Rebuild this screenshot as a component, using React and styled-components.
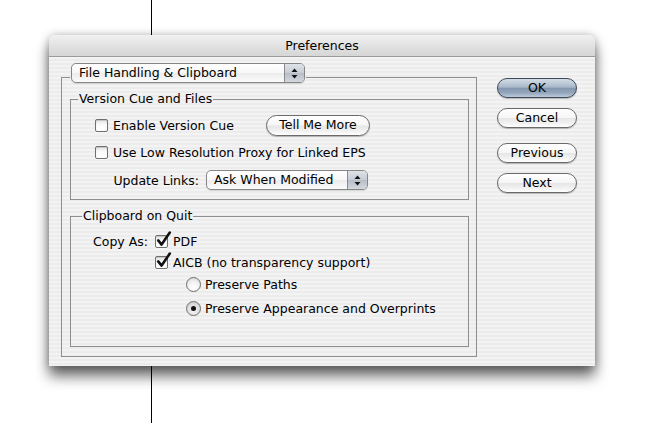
import React from "react";
import styled, { createGlobalStyle, css } from "styled-components";

const Global = createGlobalStyle`
  html, body { margin: 0; padding: 0; background: #fff; }
  * { box-sizing: border-box; }
`;

const FONT = `"DejaVu Sans", "Lucida Grande", "Noto Sans", sans-serif`;

const Stage = styled.div`
  position: relative;
  width: 645px;
  height: 423px;
  overflow: hidden;
  background: #fff;
  padding: 35px 0 0 49px;
  font-family: ${FONT};
  font-size: 12.5px;
  color: #000;
`;

const Guide = styled.div`
  position: absolute;
  left: 151px;
  top: 0;
  bottom: 0;
  width: 1px;
  background: #000;
  z-index: 0;
`;

const Dialog = styled.div`
  position: relative;
  z-index: 1;
  width: 546px;
  height: 331px;
  display: flex;
  flex-direction: column;
  border-radius: 6px 6px 0 0;
  background: repeating-linear-gradient(
    to bottom,
    #ececec 0px,
    #ececec 2px,
    #f3f3f3 2px,
    #f3f3f3 4px
  );
  box-shadow: 0 10px 14px rgba(0, 0, 0, 0.6), 0 0 8px rgba(0, 0, 0, 0.25);
`;

const TitleBar = styled.div`
  height: 22px;
  line-height: 21px;
  text-align: center;
  font-size: 12.5px;
  border-radius: 6px 6px 0 0;
  border-bottom: 1px solid #9b9b9b;
  background: linear-gradient(to bottom, #f1f1f1 0%, #e2e2e2 50%, #d6d6d6 100%);
`;

const Body = styled.div`
  flex: 1;
  display: flex;
  gap: 20px;
  padding: 6px 18px 9px 12px;
`;

const Group = styled.fieldset`
  margin: ${(p) => p.$mt || 0}px 0 0 0;
  min-inline-size: 0;
  border: 1px solid #8e8e8e;
  padding: ${(p) => p.$pad || "0"};
  width: ${(p) => p.$w}px;
  display: flex;
  flex-direction: column;
`;

const Legend = styled.legend`
  padding: 0 ${(p) => p.$px ?? 1}px ${(p) => p.$pb || 0}px ${(p) => p.$px ?? 1}px;
  margin-left: ${(p) => p.$ml || 0}px;
  line-height: 16px;
  height: ${(p) => p.$h || 16}px;
`;

const Row = styled.div`
  display: flex;
  align-items: center;
  height: ${(p) => p.$h}px;
  margin-top: ${(p) => p.$mt}px;
  padding-left: ${(p) => p.$indent}px;
  white-space: nowrap;
`;

const CheckWrap = styled.label`
  display: flex;
  align-items: center;
  gap: ${(p) => p.$gap ?? 5}px;
  width: ${(p) => (p.$w ? `${p.$w}px` : "auto")};
`;

const Box = styled.span`
  position: relative;
  display: inline-block;
  flex: none;
  width: 13px;
  height: 13px;
  border: 1px solid #6f6f6f;
  border-radius: 2px;
  background: linear-gradient(to bottom, #e4e4e4 0%, #fbfbfb 45%, #ffffff 100%);
  box-shadow: inset 0 1px 1px rgba(0, 0, 0, 0.15), 0 1px 0 rgba(255, 255, 255, 0.6);
`;

const CheckMark = styled.svg`
  position: absolute;
  left: 0px;
  top: -4px;
  width: 15px;
  height: 15px;
  overflow: visible;
`;

const Radio = styled.span`
  position: relative;
  display: inline-block;
  flex: none;
  width: 15px;
  height: 15px;
  border-radius: 50%;
  border: 1px solid #6f6f6f;
  background: radial-gradient(circle at 50% 75%, #ffffff 0%, #f4f4f4 45%, #d2d2d2 100%);
  ${(p) =>
    p.$on &&
    css`
      background: radial-gradient(circle at 50% 70%, #f4f4f4 0%, #dcdcdc 60%, #bdbdbd 100%);
      &::after {
        content: "";
        position: absolute;
        left: 4px;
        top: 4px;
        width: 5px;
        height: 5px;
        border-radius: 50%;
        background: #111;
      }
    `}
`;

const Popup = styled.div`
  display: flex;
  align-items: stretch;
  width: ${(p) => p.$w}px;
  height: 20px;
  border: 1px solid #868686;
  border-radius: 5px;
  overflow: hidden;
  background: linear-gradient(to bottom, #ffffff 0%, #f7f7f7 50%, #ececec 51%, #fbfbfb 100%);
  box-shadow: 0 1px 1px rgba(0, 0, 0, 0.12);
`;

const PopupText = styled.span`
  flex: 1;
  padding-left: 7px;
  line-height: 18px;
  white-space: nowrap;
`;

const PopupArrows = styled.span`
  width: 20px;
  display: flex;
  align-items: center;
  justify-content: center;
  border-left: 1px solid #8a8a8a;
  background: linear-gradient(to bottom, #dfe3e8 0%, #c6ccd4 50%, #b6bdc7 51%, #d3d8de 100%);
`;

const Side = styled.div`
  display: flex;
  flex-direction: column;
  padding-top: 15px;
`;

const PillButton = styled.button`
  font-family: ${FONT};
  font-size: 12.5px;
  color: #000;
  width: ${(p) => p.$w || 80}px;
  height: ${(p) => p.$h || 20}px;
  margin-top: ${(p) => p.$mt || 0}px;
  padding: 0;
  line-height: 1;
  border: 1px solid #6a6a6a;
  border-radius: 11px;
  background: linear-gradient(to bottom, #ffffff 0%, #f6f6f6 48%, #e6e6e6 52%, #f2f2f2 80%, #ffffff 100%);
  box-shadow: 0 1px 1px rgba(0, 0, 0, 0.25);
  ${(p) =>
    p.$default &&
    css`
      border-color: #3d4858;
      background: linear-gradient(
        to bottom,
        #d4dde7 0%,
        #a9b8c9 45%,
        #8497ae 52%,
        #91a4ba 75%,
        #bccadb 100%
      );
    `}
`;

const Label = styled.span`
  display: inline-block;
  width: ${(p) => (p.$w ? `${p.$w}px` : "auto")};
  text-align: ${(p) => p.$align || "left"};
  margin-right: ${(p) => p.$mr || 0}px;
`;

function Arrows() {
  return (
    <svg width="7" height="11" viewBox="0 0 7 11">
      <polygon points="3.5,0.5 6.5,4 0.5,4" fill="#111" />
      <polygon points="0.5,7 6.5,7 3.5,10.5" fill="#111" />
    </svg>
  );
}

function Checkbox({ checked, children, w, gap }) {
  return (
    <CheckWrap $w={w} $gap={gap}>
      <Box>
        {checked && (
          <CheckMark viewBox="0 0 15 15">
            <path
              d="M2.2 8.4 L5.6 12.6 L13.8 0.6"
              fill="none"
              stroke="#111"
              strokeWidth="2.6"
              strokeLinecap="round"
              strokeLinejoin="round"
            />
          </CheckMark>
        )}
      </Box>
      <span>{children}</span>
    </CheckWrap>
  );
}

function RadioOption({ on, children }) {
  return (
    <CheckWrap $gap={4}>
      <Radio $on={on} />
      <span>{children}</span>
    </CheckWrap>
  );
}

export default function App() {
  return (
    <Stage>
      <Global />
      <Guide />
      <Dialog>
        <TitleBar>Preferences</TitleBar>
        <Body>
          <Group $w={416} $pad="0 7px 9px 8px">
            <Legend $h={28} $pb={8} $px={1}>
              <Popup $w={234}>
                <PopupText>File Handling &amp; Clipboard</PopupText>
                <PopupArrows>
                  <Arrows />
                </PopupArrows>
              </Popup>
            </Legend>

            <Group $w={399}>
              <Legend $ml={7}>Version Cue and Files</Legend>
              <Row $h={22} $mt={7} $indent={24}>
                <Checkbox w={171}>Enable Version Cue</Checkbox>
                <PillButton $w={104} $h={21}>Tell Me More</PillButton>
              </Row>
              <Row $h={18} $mt={7} $indent={24}>
                <Checkbox>Use Low Resolution Proxy for Linked EPS</Checkbox>
              </Row>
              <Row $h={20} $mt={9} $indent={18}>
                <Label $w={110} $align="right" $mr={7}>Update Links:</Label>
                <Popup $w={162}>
                  <PopupText>Ask When Modified</PopupText>
                  <PopupArrows>
                    <Arrows />
                  </PopupArrows>
                </Popup>
              </Row>
              <Row $h={9} $mt={0} $indent={0} />
            </Group>

            <Group $w={399} $mt={8}>
              <Legend $ml={11}>Clipboard on Quit</Legend>
              <Row $h={18} $mt={8} $indent={22}>
                <Label $w={62}>Copy As:</Label>
                <Checkbox checked>PDF</Checkbox>
              </Row>
              <Row $h={18} $mt={3} $indent={84}>
                <Checkbox checked>AICB (no transparency support)</Checkbox>
              </Row>
              <Row $h={18} $mt={4} $indent={115}>
                <RadioOption>Preserve Paths</RadioOption>
              </Row>
              <Row $h={18} $mt={6} $indent={115}>
                <RadioOption on>Preserve Appearance and Overprints</RadioOption>
              </Row>
              <Row $h={29} $mt={0} $indent={0} />
            </Group>
          </Group>

          <Side>
            <PillButton $default>OK</PillButton>
            <PillButton $mt={10}>Cancel</PillButton>
            <PillButton $mt={15}>Previous</PillButton>
            <PillButton $mt={10}>Next</PillButton>
          </Side>
        </Body>
      </Dialog>
    </Stage>
  );
}
